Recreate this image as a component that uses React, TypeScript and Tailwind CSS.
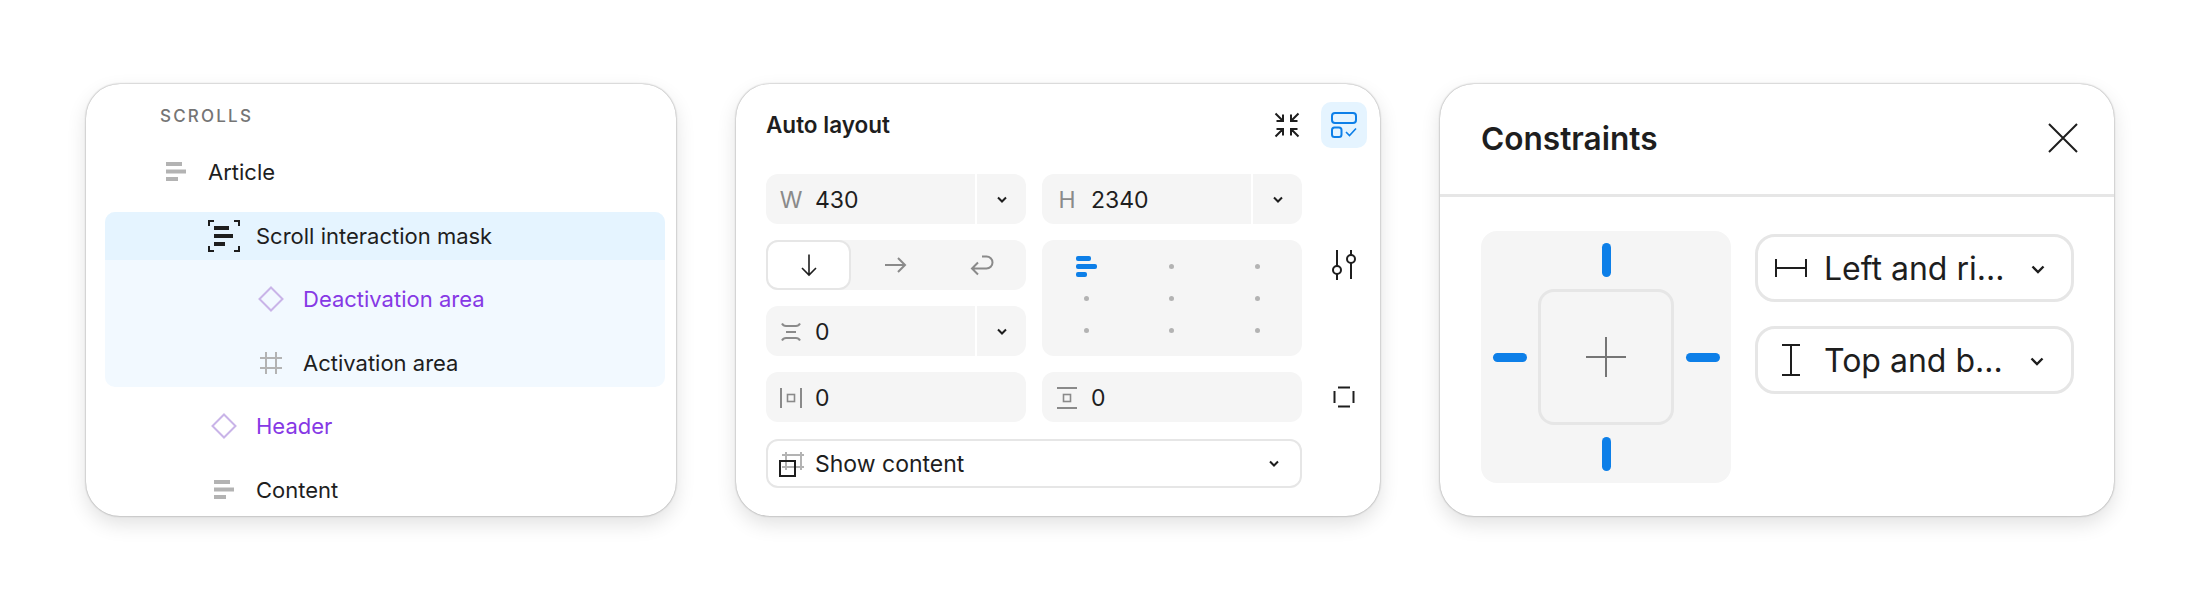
import React from "react";

const Lines = () => (
  <svg width="20" height="20" viewBox="0 0 20 20" fill="#b3b3b3">
    <rect x="0" y="0" width="16" height="4" />
    <rect x="0" y="7.5" width="20" height="4" />
    <rect x="0" y="15" width="12" height="4" />
  </svg>
);
const Mask = () => (
  <svg width="32" height="32" viewBox="0 0 32 32" fill="none">
    <path d="M1 6V1H6M26 1H31V6M1 26V31H6M26 31H31V26" stroke="#1e1e1e" strokeWidth="2" />
    <rect x="6" y="6" width="15" height="4" fill="#1e1e1e" />
    <rect x="6" y="14" width="19" height="4" fill="#1e1e1e" />
    <rect x="6" y="22" width="11" height="4" fill="#1e1e1e" />
  </svg>
);
const Diamond = () => (
  <svg width="26" height="26" viewBox="0 0 26 26" fill="none">
    <path d="M13 1.5L24.5 13L13 24.5L1.5 13Z" stroke="#c9b4e8" strokeWidth="2" />
  </svg>
);
const Hash = () => (
  <svg width="24" height="24" viewBox="0 0 24 24" fill="none" stroke="#b3b3b3" strokeWidth="2">
    <path d="M7 1V23M17 1V23M1 7H23M1 17H23" />
  </svg>
);
const Chevron = () => (
  <svg width="12" height="8" viewBox="0 0 12 8" fill="none" stroke="#1e1e1e" strokeWidth="2">
    <path d="M2 1.5L6 5.5L10 1.5" />
  </svg>
);
const Collapse = () => (
  <svg width="26" height="26" viewBox="0 0 26 26" fill="none" stroke="#1e1e1e" strokeWidth="2">
    <path d="M1.5 1.5L8.5 8.5M9 2.5V9H2.5M24.5 1.5L17.5 8.5M17 2.5V9H23.5M1.5 24.5L8.5 17.5M9 23.5V17H2.5M24.5 24.5L17.5 17.5M17 23.5V17H23.5" />
  </svg>
);
const ViewCheck = () => (
  <svg width="26" height="26" viewBox="0 0 26 26" fill="none" stroke="#0d7fe8" strokeWidth="2">
    <rect x="1" y="1" width="24" height="10" rx="3" />
    <rect x="1" y="15.5" width="9.5" height="9.5" rx="2.5" />
    <path d="M15 20L18.5 23.5L25 16.5" strokeWidth="1.6" />
  </svg>
);
const ArrowDown = () => (
  <svg width="18" height="24" viewBox="0 0 18 24" fill="none" stroke="#1e1e1e" strokeWidth="1.6">
    <path d="M9 1.5V22M2 15L9 22L16 15" />
  </svg>
);
const ArrowRight = () => (
  <svg width="24" height="18" viewBox="0 0 24 18" fill="none" stroke="#8a8a8a" strokeWidth="2">
    <path d="M2 9H22M15 2L22 9L15 16" />
  </svg>
);
const ArrowReturn = () => (
  <svg width="24" height="21" viewBox="0 0 24 21" fill="none" stroke="#8a8a8a" strokeWidth="2">
    <path d="M12 1.5H16.5a6 6 0 0 1 0 12H2M8 7.5L2 13.5L8 19.5" />
  </svg>
);
const Spacing = () => (
  <svg width="20" height="20" viewBox="0 0 20 20" fill="none" stroke="#8a8a8a" strokeWidth="2">
    <path d="M1 1.5C2 3.5 3 4 5 4H15C17 4 18 3.5 19 1.5M5 10H15M1 18.5C2 16.5 3 16 5 16H15C17 16 18 16.5 19 18.5" />
  </svg>
);
const PadH = () => (
  <svg width="22" height="22" viewBox="0 0 22 22" fill="none" stroke="#8a8a8a" strokeWidth="2">
    <path d="M1 1V21M21 1V21" />
    <rect x="7.5" y="7.5" width="7" height="7" strokeWidth="1.6" />
  </svg>
);
const PadV = () => (
  <svg width="22" height="22" viewBox="0 0 22 22" fill="none" stroke="#8a8a8a" strokeWidth="2">
    <path d="M1 1H21M1 21H21" />
    <rect x="7.5" y="7.5" width="7" height="7" strokeWidth="1.6" />
  </svg>
);
const Sliders = () => (
  <svg width="26" height="30" viewBox="0 0 26 30" fill="none" stroke="#1e1e1e" strokeWidth="2">
    <path d="M6 0V16M6 24V30M20 0V5M20 13V29" />
    <circle cx="6" cy="20" r="4" />
    <circle cx="20" cy="9" r="4" />
  </svg>
);
const Corners = () => (
  <svg width="22" height="22" viewBox="0 0 22 22" fill="none" stroke="#1e1e1e" strokeWidth="2">
    <path d="M5 1.5H17M5 20.5H17M1.5 5V17M20.5 5V17" />
  </svg>
);
const Clip = () => (
  <svg width="26" height="26" viewBox="0 0 26 26" fill="none">
    <path d="M7 1V19M22 1V19M3 4H25M3 16H25" stroke="#b3b3b3" strokeWidth="2" />
    <rect x="1" y="10" width="15" height="15" stroke="#1e1e1e" strokeWidth="2" fill="none" />
  </svg>
);
const Close = () => (
  <svg width="30" height="30" viewBox="0 0 30 30" fill="none" stroke="#1e1e1e" strokeWidth="2">
    <path d="M1 1L29 29M29 1L1 29" />
  </svg>
);
const Plus = () => (
  <svg width="40" height="40" viewBox="0 0 40 40" fill="none" stroke="#757575" strokeWidth="2">
    <path d="M20 0V40M0 20H40" />
  </svg>
);
const HSpan = () => (
  <svg width="32" height="18" viewBox="0 0 32 18" fill="none" stroke="#1e1e1e" strokeWidth="2">
    <path d="M1 0V18M31 0V18M1 9H31" />
  </svg>
);
const VSpan = () => (
  <svg width="18" height="32" viewBox="0 0 18 32" fill="none" stroke="#1e1e1e" strokeWidth="2">
    <path d="M0 1H18M0 31H18M9 1V31" />
  </svg>
);

const Row = ({ pad, icon, label, purple, bg }: { pad: string; icon: React.ReactNode; label: string; purple?: boolean; bg?: string }) => (
  <div className={`flex h-12 items-center rounded-t-[10px] ${pad} ${bg ?? ""}`}>
    <span className="flex w-10 shrink-0 justify-center">{icon}</span>
    <span className={`ml-3 text-[22px] leading-none ${purple ? "text-[#8638e5]" : "text-[#1e1e1e]"}`}>{label}</span>
  </div>
);

const Field = ({ label, icon, value, drop }: { label?: string; icon?: React.ReactNode; value: string; drop?: boolean }) => (
  <div className="flex h-[50px] items-center rounded-[12px] bg-[#f5f5f5]">
    <span className="flex w-[49px] shrink-0 justify-center pl-[1px] pt-[2px] text-[23px] leading-none text-[#8a8a8a]">{label ?? icon}</span>
    <span className="flex-1 pt-[2px] text-[23px] leading-none text-[#1e1e1e]">{value}</span>
    {drop && (
      <span className="flex h-full w-[51px] shrink-0 items-center justify-center border-l-2 border-white pt-[2px]">
        <Chevron />
      </span>
    )}
  </div>
);

const Dot = () => <span className="h-[5px] w-[5px] rounded-full bg-[#b3b3b3]" />;

const cardCls = "box-border h-[432px] shrink-0 overflow-hidden rounded-[34px] bg-white shadow-[0_0_2px_rgba(0,0,0,0.45),0_8px_20px_rgba(0,0,0,0.12)]";

const Select = ({ icon, label }: { icon: React.ReactNode; label: string }) => (
  <div className="flex h-[68px] items-center rounded-[20px] border-[3px] border-[#e6e6e6] bg-white">
    <span className="flex w-[63px] shrink-0 justify-center pl-[2px]">{icon}</span>
    <span className="flex-1 whitespace-nowrap pl-[3px] pt-[2px] text-[32px] leading-none text-[#1e1e1e]">{label}</span>
    <span className="flex w-[68px] shrink-0 justify-center pt-[3px]">
      <svg width="14" height="9" viewBox="0 0 14 9" fill="none" stroke="#1e1e1e" strokeWidth="2.4"><path d="M1.5 1.5L7 7L12.5 1.5" /></svg>
    </span>
  </div>
);

const HBar = () => <span className="h-[9px] w-[34px] rounded-full bg-[#0d7fe8]" />;
const VBar = () => <span className="h-[34px] w-[9px] rounded-full bg-[#0d7fe8]" />;

export default function App() {
  return (
    <div className="flex min-h-[600px] w-[2200px] items-start gap-[60px] bg-white pl-[86px] pt-[84px] font-[Inter,sans-serif]">
      {/* Layers */}
      <div className={`${cardCls} w-[590px] pl-[19px] pr-[11px] pt-[20px]`}>
        <div className="flex h-6 items-center pl-[55px] text-[17px] font-medium leading-none tracking-[2.2px] text-[#757575]">SCROLLS</div>
        <div className="mt-[20px] flex flex-col gap-[15.6px]">
          <Row pad="pl-[51px]" icon={<Lines />} label="Article" />
          <div className="flex flex-col gap-[15.6px] rounded-[10px] bg-[#f2f9ff]">
            <Row pad="pl-[99px]" icon={<Mask />} label="Scroll interaction mask" bg="bg-[#e5f4ff]" />
            <Row pad="pl-[146px]" icon={<Diamond />} label="Deactivation area" purple />
            <Row pad="pl-[146px]" icon={<Hash />} label="Activation area" />
          </div>
          <Row pad="pl-[99px]" icon={<Diamond />} label="Header" purple />
          <Row pad="pl-[99px]" icon={<Lines />} label="Content" />
        </div>
      </div>

      {/* Auto layout */}
      <div className={`${cardCls} w-[644px] pl-[30px] pt-[18px]`}>
        <div className="flex h-[46px] w-[601px] items-center">
          <span className="flex-1 text-[22.5px] font-semibold leading-none text-[#1e1e1e]">Auto layout</span>
          <Collapse />
          <span className="ml-[21px] flex h-[46px] w-[46px] items-center justify-center rounded-[10px] bg-[#e5f4ff]">
            <ViewCheck />
          </span>
        </div>
        <div className="mt-[26px] grid grid-cols-[260px_260px_52px] grid-rows-[50px_50px_50px_50px_50px] gap-x-4 gap-y-4">
          <Field label="W" value="430" drop />
          <Field label="H" value="2340" drop />
          <span />
          <div className="flex h-[50px] items-center rounded-[12px] bg-[#f5f5f5]">
            <span className="flex h-full w-[85px] items-center justify-center rounded-[12px] border-2 border-[#e6e6e6] bg-white"><ArrowDown /></span>
            <span className="flex h-full w-[87px] items-center justify-center"><ArrowRight /></span>
            <span className="flex h-full w-[88px] items-center justify-center"><ArrowReturn /></span>
          </div>
          <div className="row-span-2 grid grid-cols-3 grid-rows-3 place-items-center rounded-[12px] bg-[#f5f5f5] px-[2px] py-[10px]">
            <svg width="21" height="21" viewBox="0 0 21 21" fill="#0d7fe8">
              <rect x="0" y="0" width="15" height="5" rx="2" />
              <rect x="0" y="8" width="21" height="5" rx="2" />
              <rect x="0" y="16" width="11" height="5" rx="2" />
            </svg>
            <Dot /><Dot /><Dot /><Dot /><Dot /><Dot /><Dot /><Dot />
          </div>
          <span className="flex items-center justify-center"><Sliders /></span>
          <Field icon={<Spacing />} value="0" drop />
          <span />
          <Field icon={<PadH />} value="0" />
          <Field icon={<PadV />} value="0" />
          <span className="flex items-center justify-center"><Corners /></span>
          <div className="col-span-2 mt-[1px] flex h-[49px] items-center rounded-[12px] border-2 border-[#e6e6e6] bg-white">
            <span className="flex w-[47px] shrink-0 justify-center"><Clip /></span>
            <span className="flex-1 pt-[1px] text-[23px] leading-none text-[#1e1e1e]">Show content</span>
            <span className="flex w-[52px] shrink-0 justify-center pt-[1px]"><Chevron /></span>
          </div>
        </div>
      </div>

      {/* Constraints */}
      <div className={`${cardCls} w-[674px]`}>
        <div className="flex h-[113px] items-center justify-between border-b-[3px] border-[#e6e6e6] pb-[2px] pl-[41px] pr-[36px]">
          <span className="pt-[2px] text-[31.6px] font-semibold leading-none text-[#1e1e1e]">Constraints</span>
          <Close />
        </div>
        <div className="flex gap-6 pl-[41px] pt-[34px]">
          <div className="grid h-[252px] w-[250px] grid-cols-[57px_136px_57px] grid-rows-[58px_136px_58px] place-items-center rounded-[16px] bg-[#f5f5f5]">
            <span />
            <VBar />
            <span />
            <HBar />
            <div className="flex h-[136px] w-[136px] items-center justify-center rounded-[16px] border-[3px] border-[#e6e6e6]"><Plus /></div>
            <HBar />
            <span />
            <VBar />
            <span />
          </div>
          <div className="flex w-[319px] flex-col gap-6 pt-[3px]">
            <Select icon={<HSpan />} label="Left and ri..." />
            <Select icon={<VSpan />} label="Top and b..." />
          </div>
        </div>
      </div>
    </div>
  );
}
